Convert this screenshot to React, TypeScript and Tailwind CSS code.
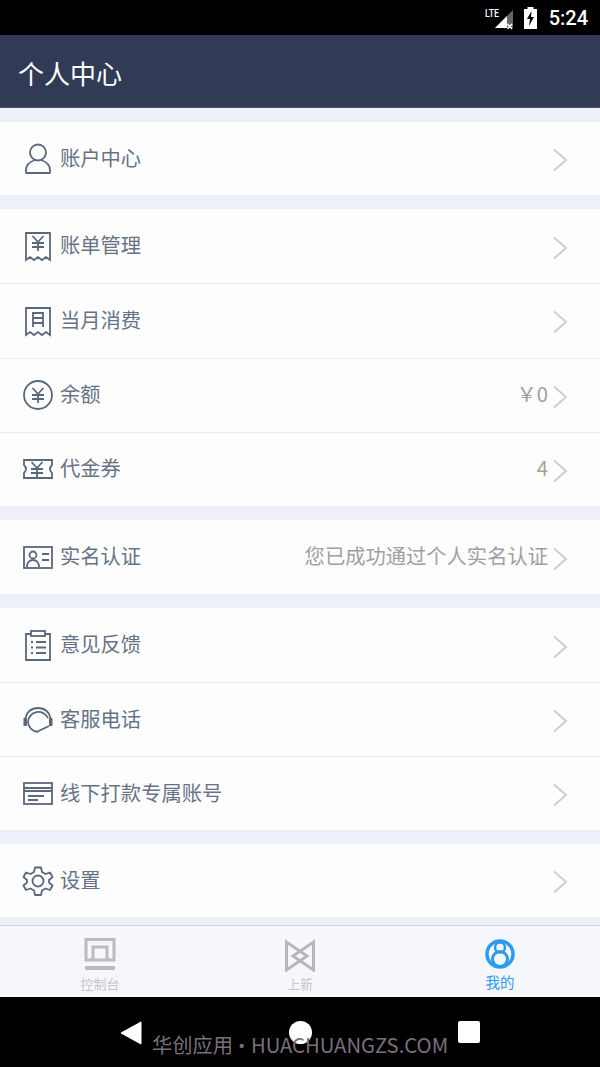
import React from "react";

const S = { fill: "none", stroke: "#5a687c", strokeWidth: 1.8 } as const;

const Yen = ({ x, y }: { x: number; y: number }) => (
  <g transform={`translate(${x} ${y})`} fill="none" stroke="#5a687c" strokeWidth={1.8}>
    <path d="M-5.5 -7 L0 -1 L5.5 -7 M0 -1 V8 M-6 0 H6 M-6 4 H6" />
  </g>
);

const Icons: Record<string, React.ReactNode> = {
  user: (
    <g {...S}>
      <circle cx="16" cy="9.5" r="8" />
      <path d="M4 30 v-3 c0 -6 6 -9 9 -10 M28 30 v-3 c0 -6 -6 -9 -9 -10 M3.5 30 H28.5" />
    </g>
  ),
  bill: (
    <g {...S}>
      <path d="M4 30 V3 H28 V30 L24 27 L20 30 L16 27 L12 30 L8 27 Z" />
      <Yen x={16} y={13} />
    </g>
  ),
  month: (
    <g {...S}>
      <path d="M4 30 V3 H28 V30 L24 27 L20 30 L16 27 L12 30 L8 27 Z" />
      <path d="M11 22 V8 H21 V22 M11 13 H21 M11 18 H21" />
    </g>
  ),
  balance: (
    <g {...S}>
      <circle cx="16" cy="16" r="14" />
      <Yen x={16} y={16} />
    </g>
  ),
  voucher: (
    <g {...S}>
      <path d="M2 7 H30 V12 Q26 16 30 20 V25 H2 V20 Q6 16 2 12 Z" />
      <Yen x={15} y={16} />
    </g>
  ),
  idcard: (
    <g {...S}>
      <rect x="2" y="6" width="28" height="21" />
      <circle cx="11" cy="14" r="3.5" />
      <path d="M5 26 c0 -5 3 -7 6 -7 s6 2 6 7 M20 13 H27 M20 19 H27" />
    </g>
  ),
  feedback: (
    <g {...S}>
      <path d="M9 5 H4 V31 H28 V5 H23" />
      <rect x="9" y="2" width="14" height="5" />
      <path d="M9 13 H11 M14 13 H24 M9 18.5 H11 M14 18.5 H24 M9 24 H11 M14 24 H24" />
    </g>
  ),
  service: (
    <g {...S}>
      <path d="M3.5 16 C3.5 0 28.5 0 28.5 16" />
      <path d="M6 18 A10.5 10.5 0 0 1 26 14 M6 18 A10.5 10.5 0 0 0 16 28" />
      <path d="M15.5 27.5 L27 22" />
      <rect x="1.5" y="14" width="3.5" height="8" fill="#5a687c" stroke="none" />
      <rect x="27" y="14" width="3.5" height="8" fill="#5a687c" stroke="none" />
    </g>
  ),
  bank: (
    <g {...S}>
      <rect x="2" y="5" width="28" height="21" />
      <path d="M2 10 H30 M2 13 H30 M6 18 H22 M6 22 H16" />
    </g>
  ),
  gear: (
    <g {...S}>
      <circle cx="16" cy="16" r="5.5" />
      <path d="M13 2.5 H19 L20 7 L23.5 9 L28 7.5 L30.5 12 L27 15 V17.5 L30.5 20.5 L28 25 L23.5 23.5 L20 25.5 L19 30 H13 L12 25.5 L8.5 23.5 L4 25 L1.5 20.5 L5 17.5 V15 L1.5 12 L4 7.5 L8.5 9 L12 7 Z" strokeLinejoin="round" />
    </g>
  ),
};

function Row({ icon, label, value, h = "h-[74px]", border = false }: { icon: string; label: string; value?: string; h?: string; border?: boolean }) {
  return (
    <div className={`${h} bg-[#fdfdfe] flex items-center pl-[22px] pr-[32px] ${border ? "border-t border-[#e9ecf1]" : ""}`}>
      <svg width="32" height="32" viewBox="0 0 32 32" className="shrink-0">{Icons[icon]}</svg>
      <span className="ml-[6px] text-[20.3px] leading-[28px] text-[#667386] -mt-[4px]">{label}</span>
      <span className="ml-auto text-[20.3px] leading-[28px] text-[#a0a0a0] -mt-[4px]">{value}</span>
      <svg width="16" height="24" viewBox="0 0 16 24" className="ml-[4px] mt-[3px] shrink-0">
        <path d="M2 1.5 L14 12 L2 22.5" fill="none" stroke="#cdcfd2" strokeWidth="2" />
      </svg>
    </div>
  );
}

export default function App() {
  return (
    <div className="w-[600px] h-[1067px] overflow-hidden bg-black relative flex flex-col" style={{ fontFamily: '"Noto Sans CJK SC", "Noto Sans", sans-serif' }}>
      <div className="h-[35px] bg-black flex items-center justify-end pr-[12px] text-white shrink-0">
        <svg width="30" height="24" viewBox="0 0 30 24" className="mr-[9px]">
          <path d="M10 22 L28 4 V22 Z" fill="#666" />
          <path d="M10 22 L22 10 V22 Z" fill="#fff" />
          <text x="0" y="11" fontSize="11" fill="#fff" fontFamily="Roboto" fontWeight="500" textLength="14" lengthAdjust="spacingAndGlyphs">LTE</text>
          <path d="M22.5 18 L27 23 M27 18 L22.5 23" stroke="#fff" strokeWidth="1.5" />
        </svg>
        <svg width="13" height="22" viewBox="0 0 13 22" className="mr-[12px]">
          <path d="M3.5 0 H9.5 V2 H13 V22 H0 V2 H3.5 Z" fill="#fff" />
          <path d="M7.5 4 L3 12 H6 L5 19 L10 10 H7 Z" fill="#000" />
        </svg>
        <span className="text-[20px] font-medium leading-none" style={{ fontFamily: "Roboto, sans-serif" }}>5:24</span>
      </div>

      <div className="h-[73px] bg-[#323b55] border-b border-[#4a5268] flex items-center pl-[18px] pt-[2px] text-[26px] text-white shrink-0">
        个人中心
      </div>

      <div className="flex-1 bg-[#edf0f9] flex flex-col gap-[14px] pt-[14px]">
        <Row icon="user" label="账户中心" h="h-[73px]" />
        <div>
          <Row icon="bill" label="账单管理" h="h-[74.25px]" />
          <Row icon="month" label="当月消费" h="h-[74.25px]" border />
          <Row icon="balance" label="余额" value="￥0" h="h-[74.25px]" border />
          <Row icon="voucher" label="代金券" value="4" h="h-[74.25px]" border />
        </div>
        <Row icon="idcard" label="实名认证" value="您已成功通过个人实名认证" />
        <div>
          <Row icon="feedback" label="意见反馈" />
          <Row icon="service" label="客服电话" border />
          <Row icon="bank" label="线下打款专属账号" border />
        </div>
        <Row icon="gear" label="设置" h="h-[73px]" />
      </div>

      <div className="h-[72px] bg-[#f6f7fc] border-t border-[#d5d7dd] flex shrink-0">
        <div className="w-1/3 flex flex-col items-center pt-[12px] text-[#c6c6c6] text-[13px] leading-[16px]">
          <svg width="32" height="32" viewBox="0 0 32 32">
            <path d="M2 1.5 H30 V22 H2 Z M9 9 H23 V22 H9 Z" fill="none" stroke="#bcbcbc" strokeWidth="3" />
            <rect x="1" y="28" width="30" height="4" fill="#bcbcbc" />
          </svg>
          <span className="mt-[6px]">控制台</span>
        </div>
        <div className="w-1/3 flex flex-col items-center pt-[12px] text-[#c6c6c6] text-[13px] leading-[16px]">
          <svg width="32" height="34" viewBox="0 0 32 34">
            <path d="M2.5 4 V32 L23 18 L2.5 4 Z M29.5 4 V32 L9 18 L29.5 4 Z" fill="none" stroke="#b8b8b8" strokeWidth="3" strokeLinejoin="miter" />
          </svg>
          <span className="mt-[4px]">上新</span>
        </div>
        <div className="w-1/3 flex flex-col items-center pt-[13px] text-[#2b9af3] text-[14.5px] leading-[18px]">
          <svg width="30" height="30" viewBox="0 0 30 30">
            <circle cx="15" cy="15" r="13" fill="none" stroke="#2b9af3" strokeWidth="3.5" />
            <circle cx="15" cy="8.5" r="5" fill="none" stroke="#2b9af3" strokeWidth="2.5" />
            <circle cx="15" cy="20" r="7.5" fill="none" stroke="#2b9af3" strokeWidth="3" />
          </svg>
          <span className="mt-[4px]">我的</span>
        </div>
      </div>

      <div className="h-[70px] bg-black shrink-0 relative">
        <svg width="22" height="24" viewBox="0 0 22 24" className="absolute left-[120px] top-[24px]">
          <path d="M21 1 V23 L1 12 Z" fill="#fff" stroke="#fff" strokeLinejoin="round" />
        </svg>
        <div className="absolute left-[289px] top-[24px] w-[23px] h-[23px] rounded-full bg-white" />
        <div className="absolute left-[458px] top-[24px] w-[22px] h-[22px] rounded-[2px] bg-white" />
        <div className="absolute left-[152px] top-[32px] text-[20.3px] leading-[30px] text-[#7a6f7c] whitespace-nowrap">
          华创应用
          <span className="ml-[5px] mr-[6px]" style={{ fontFamily: "Roboto, sans-serif" }}>•</span>
          HUACHUANGZS.COM
        </div>
      </div>
    </div>
  );
}
